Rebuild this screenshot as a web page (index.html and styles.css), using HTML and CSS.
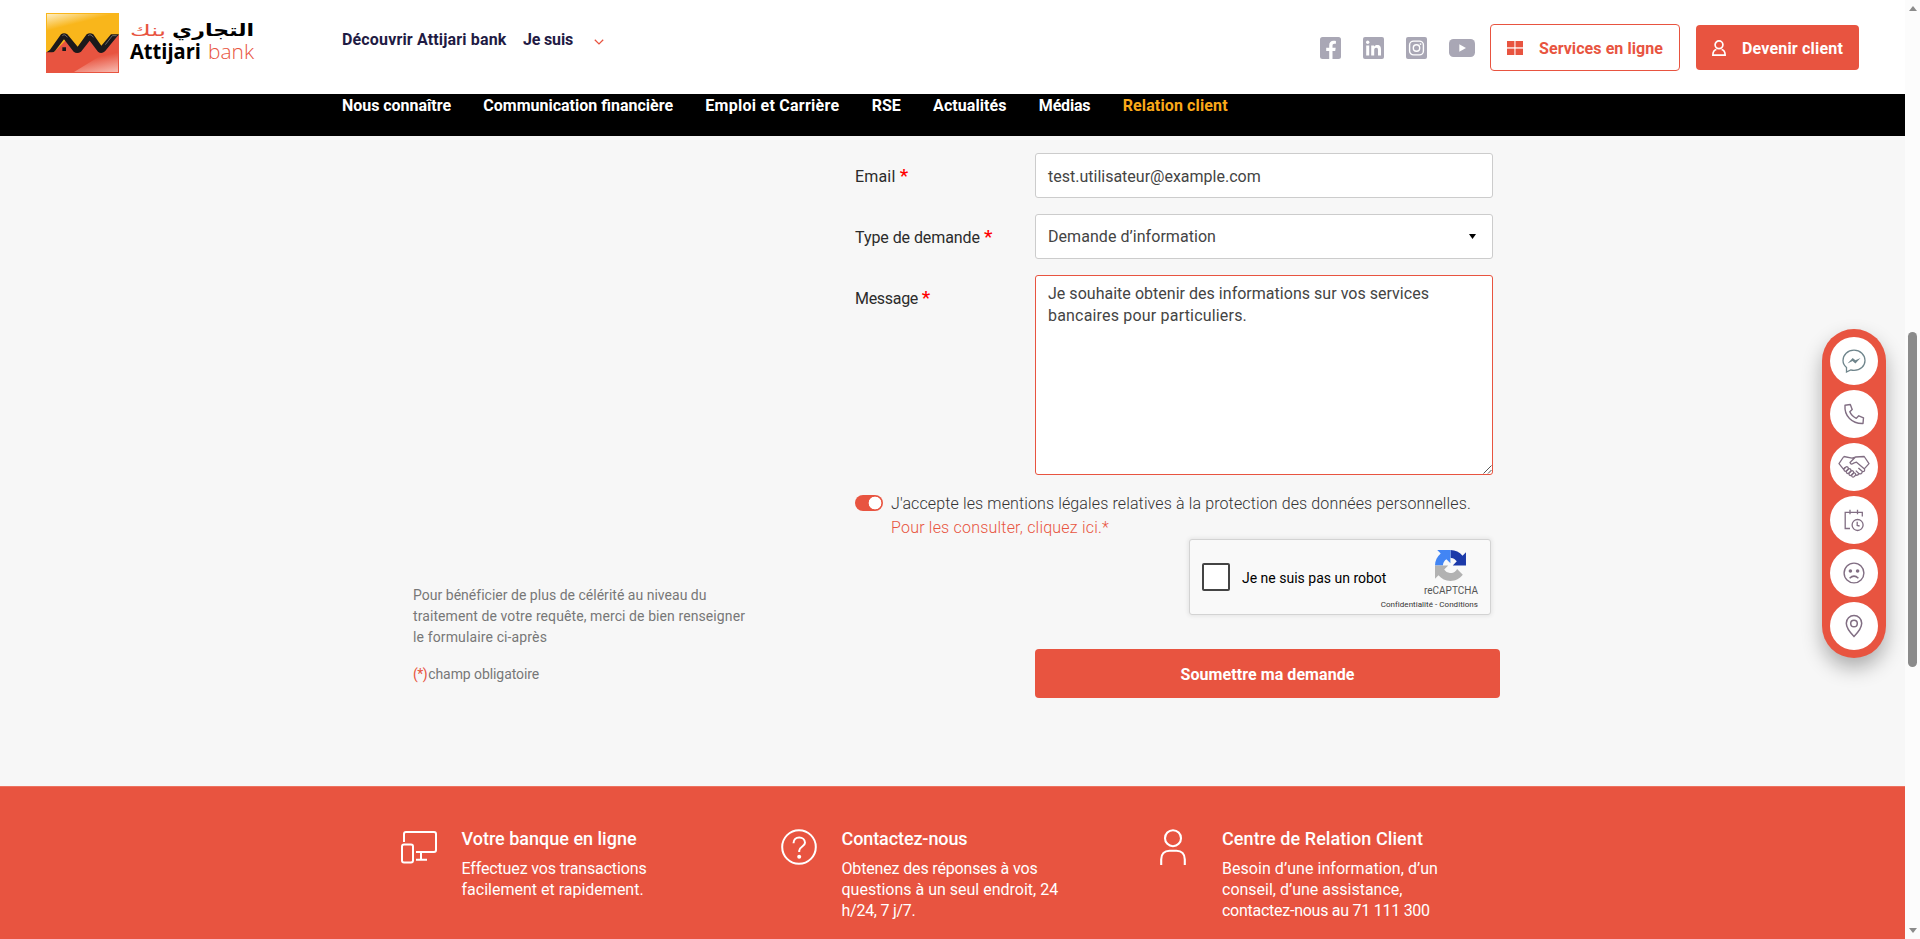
FILE: index.html
```
<!DOCTYPE html>
<html lang="fr">
<head>
<meta charset="utf-8">
<title>Attijari bank - Relation client</title>
<link rel="stylesheet" href="styles.css">
</head>
<body>
<div class="window">
<div class="page">
  <header class="header">
    <a class="logo">
      <svg width="220" height="68" viewBox="0 0 220 68">
        <defs>
          <linearGradient id="gold" x1="0" y1="0" x2=".45" y2=".75"><stop offset="0" stop-color="#fdeec4"/><stop offset=".55" stop-color="#f9b61b"/></linearGradient>
          <linearGradient id="red" x1="1" y1="1" x2=".65" y2="0"><stop offset="0" stop-color="#f8bdb3"/><stop offset=".65" stop-color="#e85440"/></linearGradient>
        </defs>
        <rect x="0" y="0" width="73" height="60" fill="#f9b61b"/>
        <rect x="1" y="1" width="71" height="30" fill="url(#gold)"/>
        <path d="M0 39H8L20 27L32 37L44 27L56 36L71 22H73V60H0Z" fill="#e85440"/>
        <path d="M28 59L72 32V59Z" fill="url(#red)"/>
        <g transform="translate(-16 -13) scale(.33333)">
          <path d="M50 157L60 149L93 103Q102 96 112 103L143 140L170 103Q180 96 190 103L214 137L243 103H267L225 154Q214 163 204 155L179 122L153 155Q141 163 131 155L102 118L75 153Q72 157 66 157ZM97 142H108V153H97Z" fill="#1c191b"/>
          <path d="M97 107Q102 101 108 107L112 112M174 107Q180 101 186 107L190 112M226 134L247 107H260" fill="none" stroke="#6c6a6c" stroke-width="3"/>
        </g>
        <g font-family="DejaVu Sans, sans-serif">
          <text x="208" y="23" text-anchor="end" direction="ltr" font-size="17" font-weight="700" textLength="82" lengthAdjust="spacingAndGlyphs" fill="#000">التجاري</text>
          <text x="120" y="23" text-anchor="end" direction="ltr" font-size="16" textLength="36" lengthAdjust="spacingAndGlyphs" fill="#e85440">بنك</text>
        </g>
        <text x="84" y="46" font-family="Open Sans, sans-serif" font-size="21" font-weight="700" textLength="71" lengthAdjust="spacingAndGlyphs">Attijari</text>
        <text x="162" y="46" font-family="Open Sans, sans-serif" font-size="20" font-weight="300" textLength="46" lengthAdjust="spacingAndGlyphs" fill="#e85440">bank</text>
      </svg>
    </a>
    <nav class="top-nav">
      <a class="discover">Découvrir Attijari bank</a>
      <a class="profile">Je suis</a>
      <svg class="chevron" width="10" height="6" viewBox="0 0 10 6"><path d="M.8.8L5 4.9L9.2.8" fill="none" stroke="#e85440" stroke-width="1.3"/></svg>
    </nav>
    <div class="social">
      <svg width="21" height="22" viewBox="0 0 21 22"><rect width="21" height="22" rx="2.5" fill="#a9a7b5"/><path d="M9.2 22V14H6.2V10.7H9.2V8.4C9.2 5.4 10.9 3.8 13.5 3.8C14.7 3.8 15.9 4 15.9 4V6.8H14.4C13 6.8 12.5 7.7 12.5 8.6V10.7H15.7L15.2 14H12.5V22Z" fill="#fff"/></svg>
      <svg width="21" height="22" viewBox="0 0 21 22"><rect width="21" height="22" rx="2" fill="#a9a7b5"/><path d="M3.2 8.4H6.2V18.6H3.2ZM8.2 8.4H11V9.8C11.6 8.8 12.7 8.1 14.2 8.1C17.2 8.1 18 10 18 12.8V18.6H15V13.5C15 12.2 14.9 10.8 13.2 10.8C11.6 10.8 11.2 12 11.2 13.4V18.6H8.2Z" fill="#fff"/><circle cx="4.7" cy="5.3" r="1.7" fill="#fff"/></svg>
      <svg width="21" height="22" viewBox="0 0 21 22"><rect width="21" height="22" rx="2" fill="#a9a7b5"/><g fill="none" stroke="#fff" stroke-width="1.4"><rect x="3.6" y="4.1" width="13.8" height="13.8" rx="4"/><circle cx="10.5" cy="11" r="3.2"/></g><circle cx="14.5" cy="7.1" r=".9" fill="#fff"/></svg>
      <svg width="26" height="18" viewBox="0 0 26 18"><rect width="26" height="18" rx="4.5" fill="#a9a7b5"/><path d="M10.3 5.2L17 9L10.3 12.8Z" fill="#fff"/></svg>
    </div>
    <a class="btn btn-outline">
      <svg width="16" height="14" viewBox="0 0 16 14"><g fill="#e85440"><rect width="7.4" height="6.3"/><rect x="8.5" width="7.5" height="6.3"/><rect y="7.6" width="7.4" height="6.4"/><rect x="8.5" y="7.6" width="7.5" height="6.4"/></g></svg>
      <span>Services en ligne</span>
    </a>
    <a class="btn btn-solid">
      <svg width="14" height="16" viewBox="0 0 14 16"><g fill="none" stroke="#fff" stroke-width="1.7"><circle cx="7" cy="4.8" r="3.9"/><path d="M4.4 9.5C1.6 10 .9 11.5.9 15.1H13.1C13.1 11.5 12.4 10 9.6 9.5"/></g></svg>
      <span>Devenir client</span>
    </a>
  </header>

  <nav class="main-nav">
    <a class="n1">Nous connaître</a>
    <a class="n2">Communication financière</a>
    <a class="n3">Emploi et Carrière</a>
    <a class="n4">RSE</a>
    <a class="n5">Actualités</a>
    <a class="n6">Médias</a>
    <a class="n7 active">Relation client</a>
  </nav>

  <main class="main">
    <aside class="intro">
      <p><span class="i1">Pour bénéficier de plus de célérité au niveau du</span><br><span class="i2">traitement de votre requête, merci de bien renseigner</span><br><span class="i3">le formulaire ci-après</span></p>
      <p><span class="mark">(*)</span><span class="i4">champ obligatoire</span></p>
    </aside>
    <form class="form">
      <div class="row">
        <label class="l1">Email <b>*</b></label>
        <div class="field f-email">test.utilisateur@example.com</div>
      </div>
      <div class="row">
        <label class="l2">Type de demande <b>*</b></label>
        <div class="field f-select"><span>Demande d’information</span><svg width="7" height="5" viewBox="0 0 7 5"><path d="M0 0H7L3.5 5Z"/></svg></div>
      </div>
      <div class="row">
        <label class="l3">Message <b>*</b></label>
        <div class="field f-area"><span class="a1">Je souhaite obtenir des informations sur vos services</span><br><span class="a2">bancaires pour particuliers.</span>
          <svg class="grip" width="9" height="9" viewBox="0 0 9 9"><path d="M.5 8.5L8.5.5M5 8.5L8.5 5" stroke="#555" stroke-width="1"/></svg>
        </div>
      </div>
      <div class="consent">
        <span class="toggle"></span>
        <p><span class="c1">J'accepte les mentions légales relatives à la protection des données personnelles.</span><br><a class="c2">Pour les consulter, cliquez ici.*</a></p>
      </div>
      <div class="captcha">
        <span class="check"></span>
        <span class="robot">Je ne suis pas un robot</span>
        <div class="brand">
          <svg width="31" height="31" viewBox="0 0 64 64">
            <path d="M64 31.955a33.4 33.4 0 0 0-.034-1.37V4.687l-7.16 7.16C50.948 4.674 42.033.093 32.05.093V16.15c.485 0 .86.057 1.135.163 4.976.393 9.288 3.14 11.828 7.124l-8.307 8.307z" fill="#1c3aa9"/>
            <path d="M31.862.094c-.46.002-.918.015-1.374.037H4.594l7.16 7.16C4.58 13.147 0 22.06 0 32.046H16.26c0-.485.057-.86.163-1.135.393-4.976 3.14-9.288 7.124-11.828l8.307 8.307z" fill="#4285f4"/>
            <path d="M.001 32.045c.002.46.015.918.037 1.374v25.894l7.16-7.16c5.856 7.173 14.77 11.754 24.754 11.754 10.4 0 19.622-4.96 25.458-12.64l-11.736-11.86a15.55 15.55 0 0 1-4.754 5.334c-2.05 1.6-4.952 2.906-8.968 2.906-.485 0-.86-.057-1.135-.163-4.976-.393-9.288-3.14-11.828-7.124l8.307-8.307z" fill="#b2b2b2"/>
          </svg>
          <span class="rc">reCAPTCHA</span>
          <span class="terms">Confidentialité - Conditions</span>
        </div>
      </div>
      <div class="submit">Soumettre ma demande</div>
    </form>
  </main>

  <footer class="footer">
    <section>
      <svg width="36" height="38" viewBox="0 0 36 38"><g fill="none" stroke="#fff" stroke-width="2"><path d="M3 14V6Q3 4 5 4H33Q35 4 35 6V22Q35 24 33 24H15M20 24V31M15 31.7H26"/><rect x="1" y="16.5" width="11" height="18" rx="2"/></g></svg>
      <div><h3 class="t1">Votre banque en ligne</h3><p><span class="d1">Effectuez vos transactions</span><br><span>facilement et rapidement.</span></p></div>
    </section>
    <section>
      <svg width="36" height="38" viewBox="0 0 36 38"><g fill="none" stroke="#fff" stroke-width="2"><circle cx="18" cy="19" r="16.8"/><path d="M12.5 15.2C12.5 11.5 15 9.5 18.2 9.5C21.5 9.5 24 11.6 24 14.8C24 18.6 18.2 18.4 18.2 22.8V24"/></g><circle cx="18.2" cy="28.8" r="2" fill="#fff"/></svg>
      <div><h3 class="t2">Contactez-nous</h3><p><span class="d3">Obtenez des réponses à vos</span><br><span>questions à un seul endroit, 24</span><br><span class="d4">h/24, 7 j/7.</span></p></div>
    </section>
    <section>
      <svg width="26" height="38" viewBox="0 0 26 38"><g fill="none" stroke="#fff" stroke-width="2.1"><circle cx="13" cy="10.2" r="8"/><path d="M1.2 37V31.5C1.2 26 4.5 22.8 9.5 22.8H16.5C21.5 22.8 24.8 26 24.8 31.5V37"/></g></svg>
      <div><h3 class="t3">Centre de Relation Client</h3><p><span class="d5">Besoin d’une information, d’un</span><br><span>conseil, d’une assistance,</span><br><span class="d6">contactez-nous au 71 111 300</span></p></div>
    </section>
  </footer>
</div>

<div class="scrollbar">
  <svg width="8" height="5" viewBox="0 0 8 5"><path d="M0 5L4 0L8 5Z" fill="#8b8b8b"/></svg>
  <span class="thumb"></span>
  <svg width="8" height="5" viewBox="0 0 8 5"><path d="M0 0L4 5L8 0Z" fill="#8b8b8b"/></svg>
</div>

<div class="quick">
  <a><svg width="24" height="24" viewBox="0 0 24 24"><path d="M4.5 18.4V23L8.7 20.9C9.8 21.3 11 21.4 12 21.4C18.3 21.4 23 17.2 23 11.6C23 5.9 18.3 1.2 12 1.2S1 5.9 1 11.6C1 14.4 2.4 16.8 4.5 18.4Z" fill="none" stroke="#6f858c" stroke-width="1.3"/><path d="M5.5 14.5L10.7 9L13.4 11.3L18.5 8.9L13.4 14.4L10.6 12.1Z" fill="#6f858c"/></svg></a>
  <a><svg width="22" height="22" viewBox="0 0 22 22"><path d="M2 2.2Q1.3 10.2 6.5 15.5T20 20.5L20.5 14.8L15.8 12.8L13.3 15.3Q8.5 13 6.8 8.8L9.2 6.5L7.3 1.5Z" fill="none" stroke="#816e83" stroke-width="1.4" stroke-linejoin="round"/></svg></a>
  <a><svg width="32" height="24" viewBox="0 0 32 24"><g fill="none" stroke="#816e83" stroke-width="1.3" stroke-linejoin="round"><path d="M5.8 1.5L1 8.6L5.4 14.2L7 12.5M5.8 1.5L14 3.2L17.5 2L26.2 1.5L31 8.6L26.7 13.4M17.5 2L12 7.5Q13 10.5 16.3 7.8L18.5 7.2L26.5 14Q27.2 16.8 24.4 16.6Q23.6 19.5 21 18.7Q19.5 21.2 17.2 19.8M24.4 16.6L20.4 12.9M21 18.7L17.8 15.6"/><rect x="5.6" y="12.5" width="5" height="3.2" rx="1.6" transform="rotate(-45 8 14)"/><rect x="7.8" y="14.6" width="5.4" height="3.2" rx="1.6" transform="rotate(-45 10.5 16)"/><rect x="10.4" y="16.7" width="5.4" height="3.2" rx="1.6" transform="rotate(-45 13 18)"/><rect x="13.3" y="18.6" width="4.6" height="3" rx="1.5" transform="rotate(-45 15.5 20)"/></g></svg></a>
  <a><svg width="20" height="24" viewBox="0 0 20 24"><g fill="none" stroke="#816e83" stroke-width="1.3"><path d="M6 20.5H1.2V4.3H18.3V8.5M6 1.8V6.2M13.5 1.8V6.2"/><circle cx="13.6" cy="17" r="5.5"/><path d="M13.2 13.8V17.4L15.6 18"/></g></svg></a>
  <a><svg width="22" height="22" viewBox="0 0 22 22"><circle cx="11" cy="11" r="9.9" fill="none" stroke="#816e83" stroke-width="1.4"/><circle cx="7.4" cy="9" r="1.8" fill="#816e83"/><circle cx="14.6" cy="9" r="1.8" fill="#816e83"/><path d="M6.6 16.3Q11 12 15.4 16.3" fill="none" stroke="#816e83" stroke-width="1.5"/></svg></a>
  <a><svg width="18" height="24" viewBox="0 0 18 24"><g fill="none" stroke="#816e83" stroke-width="1.5"><path d="M9 22.5Q1.3 14.5 1.3 9.2A7.7 7.7 0 0 1 16.7 9.2Q16.7 14.5 9 22.5Z"/><circle cx="9" cy="9.5" r="3.3"/></g></svg></a>
</div>
</div>
</body>
</html>
```
FILE: styles.css
```
* { box-sizing: border-box; }
body { margin: 0; font: 16px/24px Roboto, "Liberation Sans", sans-serif; color: #333; }
p, h3 { margin: 0; }
svg { display: block; flex: none; }
.window { position: relative; display: flex; width: 1920px; height: 939px; overflow: hidden; background: #f7f7f7; }
.page { width: 1905px; height: 939px; overflow: hidden; display: flex; flex-direction: column; white-space: nowrap; }

/* Header */
.header { height: 94px; flex: none; display: flex; align-items: flex-start; background: #fff; }
.logo { width: 342px; padding: 13px 0 0 46px; }
.top-nav { display: flex; width: 978px; padding-top: 28px; font-weight: 700; color: #1f1b44; }
.discover { width: 181px; letter-spacing: .154px; }
.profile { width: 70.5px; letter-spacing: -.17px; }
.chevron { margin-top: 11px; }
.social { display: flex; align-items: center; width: 170px; height: 22px; margin-top: 37px; gap: 22px; }
.btn { display: flex; align-items: center; border-radius: 4px; font-weight: 700; }
.btn svg { margin-top: 1px; }
.btn span { padding-top: 2px; }
.btn-outline { width: 190px; height: 47px; margin-top: 24px; padding-left: 16px; gap: 16px; border: 1px solid #e85440; color: #e85440; letter-spacing: .07px; }
.btn-solid { width: 163px; height: 45px; margin: 25px 0 0 16px; padding-left: 16px; gap: 16px; background: #e85440; color: #fff; letter-spacing: .182px; }

.main-nav { height: 42px; flex: none; display: flex; gap: 32.3px; padding-left: 342px; background: #000; color: #fff; font-weight: 700; line-height: 23px; }
.n1 { letter-spacing: -.035px; }
.n3 { letter-spacing: .26px; }
.n5 { letter-spacing: .073px; }
.n6 { letter-spacing: -.195px; }
.n7 { letter-spacing: .124px; }
.active { color: #fba919; }

/* Contact form */
.main { height: 650px; flex: none; display: flex; padding: 17px 0 0 413px; }
.intro { width: 442px; padding-top: 432px; font-size: 14px; line-height: 21px; color: #777; }
.intro p + p { margin-top: 16px; }
.mark { color: #e85440; letter-spacing: -.5px; margin-right: 1px; }
.i1 { letter-spacing: .017px; }
.i2 { letter-spacing: .089px; }
.i3 { letter-spacing: .129px; }
.i4 { letter-spacing: -.075px; }
.form { width: 645px; }
.row { display: grid; grid-template-columns: 180px 458px; margin-bottom: 16px; color: #2b2b2b; }
.row label { padding-top: 11.5px; }
.row b { color: #f00; font-size: 19px; line-height: 16px; font-weight: 500; }
.l1 { letter-spacing: .178px; }
.l2 { letter-spacing: -.071px; }
.l3 { letter-spacing: -.306px; }
.field { height: 45px; padding-left: 12px; border: 1px solid #ccc; border-radius: 3px; background: #fff; color: #444; line-height: 43px; }
.f-email { line-height: 45px; }
.f-select { display: flex; align-items: center; justify-content: space-between; padding-right: 16px; letter-spacing: .051px; fill: #000; }
.f-area { position: relative; height: 200px; padding-top: 7px; border-color: #e85440; line-height: 22px; }
.grip { position: absolute; right: 0; bottom: 0; }
.a1 { letter-spacing: .025px; }
.a2 { letter-spacing: .186px; }
.consent { display: flex; height: 48px; font-weight: 300; }
.consent p { padding: 1px 0 0 8px; }
.toggle { width: 28px; height: 16px; margin-top: 4px; border-radius: 8px; background: radial-gradient(circle at 20px 8px, #fff 6px, #e85440 6.7px); }
.c1 { letter-spacing: .125px; }
.c2 { letter-spacing: .207px; color: #e85440; }
.captcha { display: flex; align-items: center; width: 302px; height: 76px; margin-left: 334px; padding-left: 12px; border: 1px solid #d3d3d3; border-radius: 3px; background: #f9f9f9; box-shadow: 0 0 4px 1px rgba(0, 0, 0, .08); color: #000; font-size: 14px; }
.check { width: 28px; height: 28px; margin-top: -1px; border: 2px solid #444; border-radius: 2px; background: #fff; }
.robot { width: 139px; margin-left: 12px; padding-top: 1px; }
.brand { display: flex; flex-direction: column; align-items: flex-end; width: 97px; padding-top: 5px; color: #555; }
.brand svg { margin-right: 12px; }
.rc { font-size: 10px; line-height: 20px; }
.terms { font-size: 8px; line-height: 8px; letter-spacing: .037px; color: #333; }
.submit { width: 465px; height: 49px; margin: 34px 0 0 180px; padding-top: 1px; border-radius: 4px; background: #e85440; color: #fff; font-weight: 700; line-height: 50px; text-align: center; letter-spacing: .07px; }

/* Footer */
.footer { flex: 1; display: flex; padding: 40px 0 0 400.5px; border-top: 1px solid #ed7260; background: #e85440; color: #fff; }
.footer section { display: flex; width: 380px; gap: 25px; }
.footer section:last-child { gap: 36px; margin-left: -.5px; }
.footer svg { margin-top: 1px; }
.footer h3 { font-size: 18px; font-weight: 500; line-height: 24px; margin-bottom: 7px; }
.footer p { line-height: 21px; }
.t2 { letter-spacing: -.099px; }
.t3 { letter-spacing: .076px; }
.d1 { letter-spacing: -.144px; }
.d3 { letter-spacing: -.155px; }
.d4, .d6 { letter-spacing: -.26px; }
.d5 { letter-spacing: .049px; }

/* Window scrollbar */
.scrollbar { display: flex; flex-direction: column; align-items: center; width: 15px; height: 939px; padding: 6px 0; background: #fcfcfc; }
.thumb { width: 9px; height: 335px; margin: 321px 0 auto; border-radius: 5px; background: #8b8b8b; }

/* Floating shortcuts */
.quick { position: absolute; left: 1822px; top: 329px; display: flex; flex-direction: column; gap: 5px; width: 64px; padding: 8px; height: 329px; border-radius: 32px; background: #e85440; box-shadow: 0 10px 20px rgba(0, 0, 0, .3); }
.quick a { display: flex; align-items: center; justify-content: center; width: 48px; height: 48px; border-radius: 50%; background: #fff; }
```
